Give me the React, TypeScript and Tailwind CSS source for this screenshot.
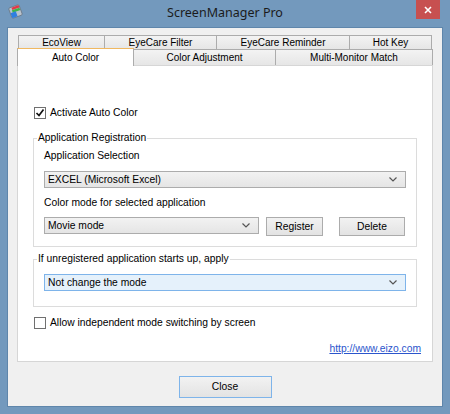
import React from "react";

const font = { fontFamily: '"Liberation Sans", Arial, sans-serif' };

function Chevron() {
  return (
    <svg width="8" height="5" viewBox="0 0 8 5" className="shrink-0">
      <path d="M0.5 0.5 L4 4 L7.5 0.5" fill="none" stroke="#555" strokeWidth="1.2" />
    </svg>
  );
}

function Combo({ value, width, focused }: { value: string; width: string; focused?: boolean }) {
  return (
    <div
      className={`${width} h-[17px] flex items-center justify-between pl-[3px] pr-[8px] border ${
        focused ? "border-[#7eb4ea] bg-[#e5f1fb]" : "border-[#acacac] bg-linear-to-b from-[#f2f2f2] to-[#e5e5e5]"
      }`}
    >
      <span className="text-[10.3px] leading-[12px] text-black">{value}</span>
      <Chevron />
    </div>
  );
}

function Button({ label, width, primary }: { label: string; width: string; primary?: boolean }) {
  return (
    <button
      className={`${width} flex items-center justify-center border bg-linear-to-b from-[#f2f2f2] to-[#e3e3e3] text-[10.3px] text-black ${
        primary ? "h-[22px] border-[#7eb4ea]" : "h-[19px] border-[#acacac]"
      }`}
    >
      {label}
    </button>
  );
}

function Checkbox({ checked, label }: { checked?: boolean; label: string }) {
  return (
    <div className="h-[13px] ml-px flex items-center gap-[4px]">
      <div className="w-[12px] h-[12px] border border-[#707070] bg-white flex items-center justify-center">
        {checked && (
          <svg width="10" height="10" viewBox="0 0 10 10">
            <path d="M1.5 5 L4 7.5 L8.5 1.5" fill="none" stroke="#111" strokeWidth="1.7" />
          </svg>
        )}
      </div>
      <span className="text-[10.3px] leading-[14px] text-black">{label}</span>
    </div>
  );
}

function Group({ title, className, children }: { title: string; className: string; children: React.ReactNode }) {
  return (
    <div className={`relative w-[384px] border border-[#dcdcdc] pl-[10px] pr-[10px] ${className}`}>
      <span className="absolute -top-[8px] left-[3px] bg-white px-px text-[10.3px] leading-[14px] text-black">
        {title}
      </span>
      {children}
    </div>
  );
}

function Tab({ label, width, first }: { label: string; width: string; first?: boolean }) {
  return (
    <div
      className={`${width} ${first ? "" : "-ml-px"} h-full flex items-center justify-center border-x border-t border-[#acacac] bg-linear-to-b from-[#f3f3f3] to-[#e6e6e6] text-[10px] text-black`}
    >
      {label}
    </div>
  );
}

function AppIcon() {
  return (
    <svg width="15" height="15" viewBox="0 0 15 15">
      <g transform="rotate(-20 7.5 7.5)">
        <rect x="2" y="2" width="11" height="11" rx="1.5" fill="#b9c2cc" stroke="#6b7885" strokeWidth="0.8" />
        <rect x="5" y="2.5" width="7.5" height="2.6" fill="#e23a4a" />
        <rect x="4.5" y="5.2" width="8" height="2.6" fill="#3fb54a" />
        <rect x="2.3" y="7.4" width="5.5" height="5.3" fill="#2f7fe0" />
      </g>
    </svg>
  );
}

export default function App() {
  return (
    <div className="w-[450px] h-[414px] bg-[#7399bd] flex flex-col" style={font}>
      {/* title bar */}
      <div className="h-[27px] grid grid-cols-[1fr_auto_1fr] items-start">
        <div className="pl-[8px] pt-[4px]">
          <AppIcon />
        </div>
        <div className="h-[27px] flex items-center text-[12.5px] text-[#1b1b1b]" style={{ fontFamily: '"Noto Sans", "Open Sans", sans-serif' }}>
          ScreenManager Pro
        </div>
        <div className="flex justify-end pr-[10px]">
          <div className="w-[24px] h-[19px] bg-[#c75050] flex items-center justify-center">
            <svg width="8" height="8" viewBox="0 0 8 8">
              <path d="M1 1 L7 7 M7 1 L1 7" stroke="#fff" strokeWidth="1.6" />
            </svg>
          </div>
        </div>
      </div>

      {/* client area */}
      <div className="mx-[7px] h-[380px] border border-[#5f86ab] bg-[#f0f0f0] pt-[7px] px-[9px] flex flex-col">
        {/* tab rows */}
        <div className="h-[14px] flex pl-px">
          <Tab label="EcoView" width="w-[87px]" first />
          <Tab label="EyeCare Filter" width="w-[113px]" />
          <Tab label="EyeCare Reminder" width="w-[134px]" />
          <Tab label="Hot Key" width="w-[83px]" />
        </div>
        <div className="h-[16px] flex items-end">
          <div className="relative z-10 w-[117px] h-[18px] -mb-px flex items-center justify-center border-x border-t border-[#acacac] border-t-[#f0b860] bg-white text-[10px] text-black">
            Auto Color
          </div>
          <Tab label="Color Adjustment" width="w-[143px]" />
          <Tab label="Multi-Monitor Match" width="w-[158px]" />
        </div>

        {/* tab panel */}
        <div className="h-[297px] border border-[#d6d6d6] bg-white pl-[15px] pr-[11px] flex flex-col">
          <div className="mt-[40px]">
            <Checkbox checked label="Activate Auto Color" />
          </div>

          <Group title="Application Registration" className="mt-[19px] pt-[10px] pb-[10px]">
            <div className="text-[10.3px] leading-[14px] text-black">Application Selection</div>
            <div className="mt-[8px]">
              <Combo value="EXCEL (Microsoft Excel)" width="w-full" />
            </div>
            <div className="mt-[8px] text-[10.3px] leading-[14px] text-black">Color mode for selected application</div>
            <div className="mt-[7px] flex items-start">
              <Combo value="Movie mode" width="w-[215px]" />
              <div className="ml-[7px]">
                <Button label="Register" width="w-[57px]" />
              </div>
              <div className="ml-[16px]">
                <Button label="Delete" width="w-[66px]" />
              </div>
            </div>
          </Group>

          <Group title="If unregistered application starts up, apply" className="mt-[12px] pt-[14px] pb-[15px]">
            <Combo value="Not change the mode" width="w-full" focused />
          </Group>

          <div className="mt-[9px]">
            <Checkbox label="Allow independent mode switching by screen" />
          </div>

          <div className="mt-[13px] flex justify-end">
            <span className="text-[10.3px] leading-[14px] text-[#2b55cc] underline">http://www.eizo.com</span>
          </div>
        </div>

        <div className="mt-[14px] flex justify-center">
          <Button label="Close" width="w-[93px]" primary />
        </div>
      </div>
    </div>
  );
}
